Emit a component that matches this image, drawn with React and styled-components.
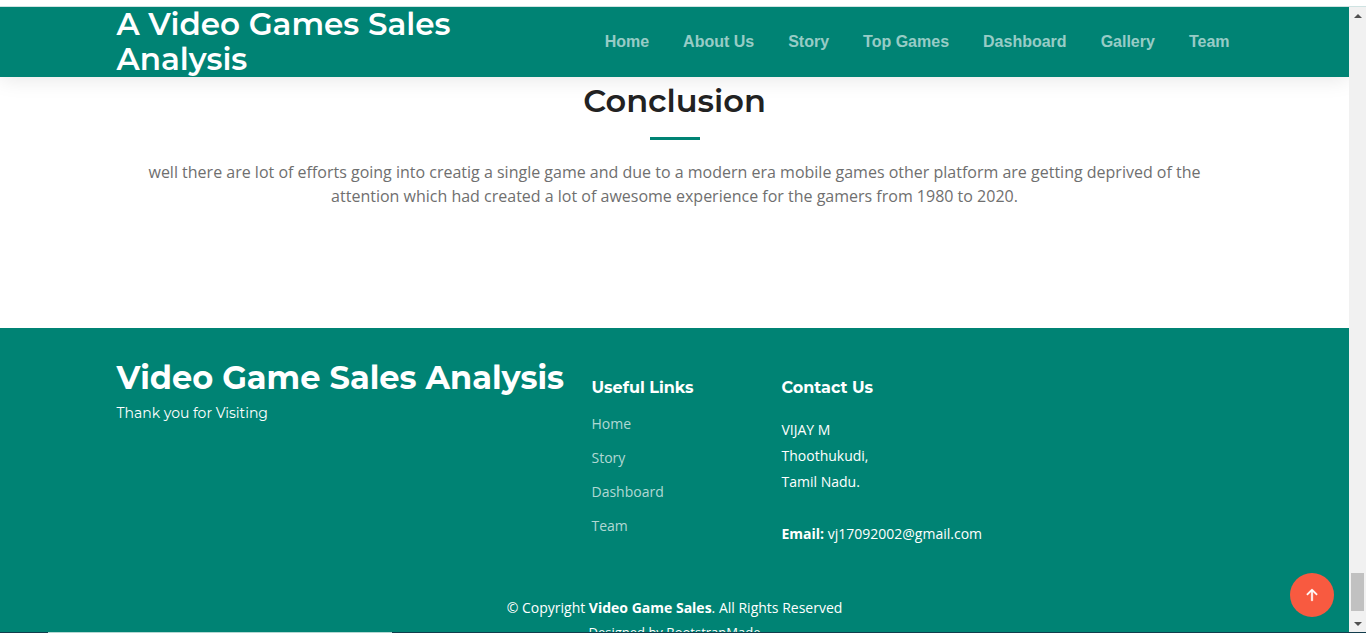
import React from "react";
import styled, { createGlobalStyle } from "styled-components";

const teal = "#008374";
const display = `Montserrat, Inter, "Liberation Sans", sans-serif`;
const bodyFont = `"Open Sans", "Noto Sans", sans-serif`;
const navFont = `"Liberation Sans", Arial, sans-serif`;

const GlobalStyle = createGlobalStyle`
  *, *::before, *::after { box-sizing: border-box; }
  body { margin: 0; font-family: ${bodyFont}; background: #fff; color: #222; }
  h1, h2, h3, p, ul { margin: 0; padding: 0; }
  ul { list-style: none; }
  a { text-decoration: none; }
`;

const Window = styled.div`
  height: 100vh;
  display: flex;
  flex-direction: column;
  overflow: hidden;
`;

const TopEdge = styled.div`
  flex: none;
  height: 7px;
  border-bottom: 1px solid #cfe3e2;
`;

const Viewport = styled.div`
  flex: 1;
  min-height: 0;
  display: flex;
`;

const Page = styled.div`
  position: relative;
  flex: 1;
  min-width: 0;
  overflow: hidden;
`;

const Container = styled.div`
  width: 100%;
  max-width: 1140px;
  margin: 0 auto;
  padding: 0 12px;
`;

const Header = styled.header`
  background: ${teal};
  box-shadow: 0 2px 20px rgba(0, 0, 0, 0.1);
`;

const HeaderRow = styled(Container)`
  display: flex;
  align-items: center;
  justify-content: space-between;
  height: 70px;
`;

const Logo = styled.h1`
  max-width: 400px;
  font: 600 31px/35px ${display};
  color: #fff;
`;

const NavList = styled.ul`
  display: flex;
  gap: 34px;
  padding-right: 3px;
`;

const NavLink = styled.a`
  font: 600 16px/24px ${navFont};
  color: rgba(255, 255, 255, 0.6);
  white-space: nowrap;
`;

const Conclusion = styled.section`
  padding: 4px 0 120px;
  text-align: center;
`;

const SectionTitle = styled.h2`
  font: 600 32px/40px ${display};
  color: #222;

  &::after {
    content: "";
    display: block;
    width: 50px;
    height: 3px;
    margin: 16px auto 20px;
    background: ${teal};
  }
`;

const SectionText = styled.p`
  padding: 0 20px;
  font-size: 16px;
  line-height: 24px;
  color: #6f6f6f;
`;

const Footer = styled.footer`
  padding: 30px 0;
  background: ${teal};
  color: #fff;
  font-size: 14px;
`;

const FooterGrid = styled(Container)`
  display: grid;
  grid-template-columns: minmax(0, 475fr) minmax(0, 190fr) minmax(0, 451fr);
`;

const FooterLogo = styled.a`
  display: block;
  font: 700 32px/40px ${display};
  color: #fff;
  white-space: nowrap;
`;

const FooterNote = styled.p`
  padding-top: 3px;
  font: 400 14px/24px ${display};
`;

const FooterColumn = styled.div`
  padding-top: 20px;
`;

const FooterHeading = styled.h3`
  font: 700 16px/20px ${display};
`;

const LinkList = styled.ul`
  padding-top: 9px;
  line-height: 34px;
`;

const FooterLink = styled.a`
  color: rgba(255, 255, 255, 0.7);
`;

const Address = styled.p`
  padding-top: 19px;
  line-height: 26px;
`;

const Legal = styled(Container)`
  padding-top: 49px;
  text-align: center;
`;

const Copyright = styled.p`
  line-height: 24px;
`;

const Credits = styled.p`
  font-size: 13px;
  line-height: 24px;

  a { color: #fff; }
`;

const ScrollTop = styled.a`
  position: absolute;
  right: 15px;
  bottom: 15px;
  width: 44px;
  height: 44px;
  display: flex;
  align-items: center;
  justify-content: center;
  border-radius: 50%;
  background: #f85a40;
  color: #fff;
`;

const Scrollbar = styled.div`
  flex: none;
  width: 17px;
  display: flex;
  flex-direction: column;
  justify-content: space-between;
  background: #f1f1f1;
`;

const ScrollButton = styled.button`
  display: flex;
  align-items: center;
  justify-content: center;
  width: 17px;
  height: 17px;
  padding: 0;
  border: 0;
  background: transparent;
  color: #505050;
`;

const ScrollEnd = styled.div`
  display: flex;
  flex-direction: column;
  gap: 4px;
`;

const ScrollThumb = styled.div`
  height: 38px;
  margin: 0 2px;
  background: #c1c1c1;
`;

const BottomEdge = styled.div`
  flex: none;
  height: 1px;
  padding-left: 48px;
  background: #123c4c;

  &::before {
    content: "";
    display: block;
    width: 344px;
    height: 1px;
    background: #b4d8d3;
  }
`;

const navItems = ["Home", "About Us", "Story", "Top Games", "Dashboard", "Gallery", "Team"];
const footerLinks = ["Home", "Story", "Dashboard", "Team"];
const anchor = (label) => "#" + label.toLowerCase().replace(" ", "-");

function ArrowUp() {
  return (
    <svg width="24" height="24" viewBox="0 0 16 16" fill="currentColor" aria-hidden="true">
      <path
        fillRule="evenodd"
        d="M8 12a.5.5 0 0 0 .5-.5V5.707l2.146 2.147a.5.5 0 0 0 .708-.708l-3-3a.5.5 0 0 0-.708 0l-3 3a.5.5 0 1 0 .708.708L7.5 5.707V11.5a.5.5 0 0 0 .5.5z"
        stroke="currentColor"
        strokeWidth="0.3"
      />
    </svg>
  );
}

function Triangle({ down }) {
  return (
    <svg width="8" height="4" viewBox="0 0 8 4" fill="currentColor" aria-hidden="true">
      <path d={down ? "M0 0h8L4 4z" : "M0 4h8L4 0z"} />
    </svg>
  );
}

export default function App() {
  return (
    <Window>
      <GlobalStyle />
      <TopEdge />
      <Viewport>
        <Page>
          <Header>
            <HeaderRow>
              <Logo>A Video Games Sales Analysis</Logo>
              <nav aria-label="Main">
                <NavList>
                  {navItems.map((label) => (
                    <li key={label}>
                      <NavLink href={anchor(label)}>{label}</NavLink>
                    </li>
                  ))}
                </NavList>
              </nav>
            </HeaderRow>
          </Header>

          <main>
            <Conclusion>
              <Container>
                <SectionTitle>Conclusion</SectionTitle>
                <SectionText>
                  well there are lot of efforts going into creatig a single game and due to a modern era
                  mobile games other platform are getting deprived of the attention which had created a
                  lot of awesome experience for the gamers from 1980 to 2020.
                </SectionText>
              </Container>
            </Conclusion>
          </main>

          <Footer>
            <FooterGrid>
              <div>
                <FooterLogo href="#home">Video Game Sales Analysis</FooterLogo>
                <FooterNote>Thank you for Visiting</FooterNote>
              </div>
              <FooterColumn>
                <FooterHeading>Useful Links</FooterHeading>
                <LinkList>
                  {footerLinks.map((label) => (
                    <li key={label}>
                      <FooterLink href={anchor(label)}>{label}</FooterLink>
                    </li>
                  ))}
                </LinkList>
              </FooterColumn>
              <FooterColumn>
                <FooterHeading>Contact Us</FooterHeading>
                <Address>
                  VIJAY M<br />
                  Thoothukudi,<br />
                  Tamil Nadu.<br />
                  <br />
                  <strong>Email:</strong> vj17092002@gmail.com
                </Address>
              </FooterColumn>
            </FooterGrid>
            <Legal>
              <Copyright>
                © Copyright <strong>Video Game Sales</strong>. All Rights Reserved
              </Copyright>
              <Credits>
                Designed by <a href="#credits">BootstrapMade</a>
              </Credits>
            </Legal>
          </Footer>

          <ScrollTop href="#home" aria-label="Back to top">
            <ArrowUp />
          </ScrollTop>
        </Page>
        <Scrollbar>
          <ScrollButton aria-label="Scroll up">
            <Triangle />
          </ScrollButton>
          <ScrollEnd>
            <ScrollThumb />
            <ScrollButton aria-label="Scroll down">
              <Triangle down />
            </ScrollButton>
          </ScrollEnd>
        </Scrollbar>
      </Viewport>
      <BottomEdge />
    </Window>
  );
}
